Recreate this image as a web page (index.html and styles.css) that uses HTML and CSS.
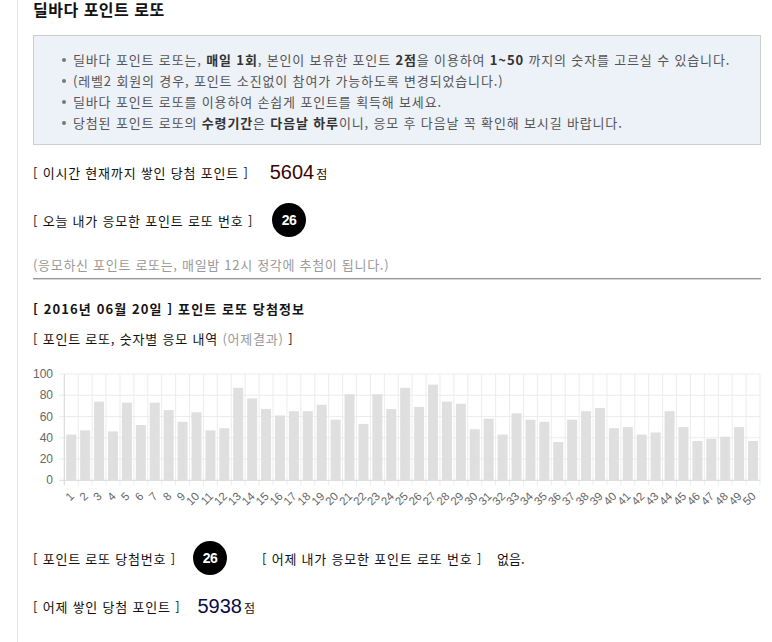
FILE: index.html
```html
<!DOCTYPE html>
<html lang="ko">
<head>
<meta charset="utf-8">
<title>딜바다 포인트 로또</title>
<link rel="stylesheet" href="styles.css">
</head>
<body>
<div class="page">
  <h2 class="title">딜바다 포인트 로또</h2>

  <div class="notice">
    <ul>
      <li>딜바다 포인트 로또는, <b>매일 1회</b>, 본인이 보유한 포인트 <b>2점</b>을 이용하여 <b>1~50</b> 까지의 숫자를 고르실 수 있습니다.</li>
      <li>(레벨2 회원의 경우, 포인트 소진없이 참여가 가능하도록 변경되었습니다.)</li>
      <li>딜바다 포인트 로또를 이용하여 손쉽게 포인트를 획득해 보세요.</li>
      <li>당첨된 포인트 로또의 <b>수령기간</b>은 <b>다음날 하루</b>이니, 응모 후 다음날 꼭 확인해 보시길 바랍니다.</li>
    </ul>
  </div>

  <div class="row row-points">
    <span class="label">[ 이시간 현재까지 쌓인 당첨 포인트 ]</span>
    <span class="big big-red">5604</span><span class="unit">점</span>
  </div>

  <div class="row row-ball">
    <span class="label">[ 오늘 내가 응모한 포인트 로또 번호 ]</span>
    <span class="ball ball-today">26</span>
  </div>

  <p class="note">(응모하신 포인트 로또는, 매일밤 12시 정각에 추첨이 됩니다.)</p>

  <hr class="divider">

  <h3 class="result-title">[ 2016년 06월 20일 ] 포인트 로또 당첨정보</h3>
  <p class="sub">[ 포인트 로또, 숫자별 응모 내역 <span class="muted">(어제결과)</span> ]</p>

  <svg class="chart" width="728" height="150" viewBox="0 0 728 150">
    <g transform="translate(31.3 121.3) scale(13.914 -1.063)">
      <path class="grid" vector-effect="non-scaling-stroke" d="M0 -4.7V100M1 -4.7V100M2 -4.7V100M3 -4.7V100M4 -4.7V100M5 -4.7V100M6 -4.7V100M7 -4.7V100M8 -4.7V100M9 -4.7V100M10 -4.7V100M11 -4.7V100M12 -4.7V100M13 -4.7V100M14 -4.7V100M15 -4.7V100M16 -4.7V100M17 -4.7V100M18 -4.7V100M19 -4.7V100M20 -4.7V100M21 -4.7V100M22 -4.7V100M23 -4.7V100M24 -4.7V100M25 -4.7V100M26 -4.7V100M27 -4.7V100M28 -4.7V100M29 -4.7V100M30 -4.7V100M31 -4.7V100M32 -4.7V100M33 -4.7V100M34 -4.7V100M35 -4.7V100M36 -4.7V100M37 -4.7V100M38 -4.7V100M39 -4.7V100M40 -4.7V100M41 -4.7V100M42 -4.7V100M43 -4.7V100M44 -4.7V100M45 -4.7V100M46 -4.7V100M47 -4.7V100M48 -4.7V100M49 -4.7V100M50 -4.7V100M-0.36 20H50M-0.36 40H50M-0.36 60H50M-0.36 80H50M-0.36 100H50"/>
      <path class="axis" vector-effect="non-scaling-stroke" d="M-0.36 0H50M0 -4.7V100"/>
      <g class="bars">
        <rect x="0.14" width="0.72" height="43"/>
        <rect x="1.14" width="0.72" height="47"/>
        <rect x="2.14" width="0.72" height="74"/>
        <rect x="3.14" width="0.72" height="46"/>
        <rect x="4.14" width="0.72" height="73"/>
        <rect x="5.14" width="0.72" height="52"/>
        <rect x="6.14" width="0.72" height="73"/>
        <rect x="7.14" width="0.72" height="66"/>
        <rect x="8.14" width="0.72" height="55"/>
        <rect x="9.14" width="0.72" height="64"/>
        <rect x="10.14" width="0.72" height="47"/>
        <rect x="11.14" width="0.72" height="49"/>
        <rect x="12.14" width="0.72" height="87"/>
        <rect x="13.14" width="0.72" height="77"/>
        <rect x="14.14" width="0.72" height="67"/>
        <rect x="15.14" width="0.72" height="61"/>
        <rect x="16.14" width="0.72" height="65"/>
        <rect x="17.14" width="0.72" height="65"/>
        <rect x="18.14" width="0.72" height="71"/>
        <rect x="19.14" width="0.72" height="57"/>
        <rect x="20.14" width="0.72" height="81"/>
        <rect x="21.14" width="0.72" height="53"/>
        <rect x="22.14" width="0.72" height="81"/>
        <rect x="23.14" width="0.72" height="67"/>
        <rect x="24.14" width="0.72" height="87"/>
        <rect x="25.14" width="0.72" height="69"/>
        <rect x="26.14" width="0.72" height="90"/>
        <rect x="27.14" width="0.72" height="74"/>
        <rect x="28.14" width="0.72" height="72"/>
        <rect x="29.14" width="0.72" height="48"/>
        <rect x="30.14" width="0.72" height="58"/>
        <rect x="31.14" width="0.72" height="43"/>
        <rect x="32.14" width="0.72" height="63"/>
        <rect x="33.14" width="0.72" height="57"/>
        <rect x="34.14" width="0.72" height="55"/>
        <rect x="35.14" width="0.72" height="36"/>
        <rect x="36.14" width="0.72" height="57"/>
        <rect x="37.14" width="0.72" height="65"/>
        <rect x="38.14" width="0.72" height="68"/>
        <rect x="39.14" width="0.72" height="49"/>
        <rect x="40.14" width="0.72" height="50"/>
        <rect x="41.14" width="0.72" height="43"/>
        <rect x="42.14" width="0.72" height="45"/>
        <rect x="43.14" width="0.72" height="65"/>
        <rect x="44.14" width="0.72" height="50"/>
        <rect x="45.14" width="0.72" height="37"/>
        <rect x="46.14" width="0.72" height="39"/>
        <rect x="47.14" width="0.72" height="41"/>
        <rect x="48.14" width="0.72" height="50"/>
        <rect x="49.14" width="0.72" height="37"/>
      </g>
    </g>
    <g class="ylabels">
      <text x="20" y="19">100</text>
      <text x="20" y="40.3">80</text>
      <text x="20" y="61.6">60</text>
      <text x="20" y="82.8">40</text>
      <text x="20" y="104.1">20</text>
      <text x="20" y="125.3">0</text>
    </g>
    <g class="xlabels">
      <text transform="translate(41.8 138) rotate(-45)">1</text>
      <text transform="translate(55.7 138) rotate(-45)">2</text>
      <text transform="translate(69.6 138) rotate(-45)">3</text>
      <text transform="translate(83.5 138) rotate(-45)">4</text>
      <text transform="translate(97.4 138) rotate(-45)">5</text>
      <text transform="translate(111.3 138) rotate(-45)">6</text>
      <text transform="translate(125.2 138) rotate(-45)">7</text>
      <text transform="translate(139.2 138) rotate(-45)">8</text>
      <text transform="translate(153.1 138) rotate(-45)">9</text>
      <text transform="translate(167.0 138) rotate(-45)">10</text>
      <text transform="translate(180.9 138) rotate(-45)">11</text>
      <text transform="translate(194.8 138) rotate(-45)">12</text>
      <text transform="translate(208.7 138) rotate(-45)">13</text>
      <text transform="translate(222.6 138) rotate(-45)">14</text>
      <text transform="translate(236.6 138) rotate(-45)">15</text>
      <text transform="translate(250.5 138) rotate(-45)">16</text>
      <text transform="translate(264.4 138) rotate(-45)">17</text>
      <text transform="translate(278.3 138) rotate(-45)">18</text>
      <text transform="translate(292.2 138) rotate(-45)">19</text>
      <text transform="translate(306.1 138) rotate(-45)">20</text>
      <text transform="translate(320.0 138) rotate(-45)">21</text>
      <text transform="translate(334.0 138) rotate(-45)">22</text>
      <text transform="translate(347.9 138) rotate(-45)">23</text>
      <text transform="translate(361.8 138) rotate(-45)">24</text>
      <text transform="translate(375.7 138) rotate(-45)">25</text>
      <text transform="translate(389.6 138) rotate(-45)">26</text>
      <text transform="translate(403.5 138) rotate(-45)">27</text>
      <text transform="translate(417.4 138) rotate(-45)">28</text>
      <text transform="translate(431.4 138) rotate(-45)">29</text>
      <text transform="translate(445.3 138) rotate(-45)">30</text>
      <text transform="translate(459.2 138) rotate(-45)">31</text>
      <text transform="translate(473.1 138) rotate(-45)">32</text>
      <text transform="translate(487.0 138) rotate(-45)">33</text>
      <text transform="translate(500.9 138) rotate(-45)">34</text>
      <text transform="translate(514.8 138) rotate(-45)">35</text>
      <text transform="translate(528.8 138) rotate(-45)">36</text>
      <text transform="translate(542.7 138) rotate(-45)">37</text>
      <text transform="translate(556.6 138) rotate(-45)">38</text>
      <text transform="translate(570.5 138) rotate(-45)">39</text>
      <text transform="translate(584.4 138) rotate(-45)">40</text>
      <text transform="translate(598.3 138) rotate(-45)">41</text>
      <text transform="translate(612.2 138) rotate(-45)">42</text>
      <text transform="translate(626.2 138) rotate(-45)">43</text>
      <text transform="translate(640.1 138) rotate(-45)">44</text>
      <text transform="translate(654.0 138) rotate(-45)">45</text>
      <text transform="translate(667.9 138) rotate(-45)">46</text>
      <text transform="translate(681.8 138) rotate(-45)">47</text>
      <text transform="translate(695.7 138) rotate(-45)">48</text>
      <text transform="translate(709.6 138) rotate(-45)">49</text>
      <text transform="translate(723.6 138) rotate(-45)">50</text>
    </g>
  </svg>

  <div class="row row-result">
    <span class="label">[ 포인트 로또 당첨번호 ]</span>
    <span class="ball ball-win">26</span>
    <span class="label label-mine">[ 어제 내가 응모한 포인트 로또 번호 ]</span>
    <span class="none">없음.</span>
  </div>

  <div class="row row-yesterday">
    <span class="label">[ 어제 쌓인 당첨 포인트 ]</span>
    <span class="big big-blue">5938</span><span class="unit">점</span>
  </div>
</div>
</body>
</html>
```

FILE: styles.css
```css
html, body {
  margin: 0;
  padding: 0;
  background: #fff;
}

body {
  font-family: "Noto Sans CJK KR", "Noto Sans", sans-serif;
  font-size: 13px;
  color: #222;
}

.page {
  margin-left: 17px;
  border-left: 1px solid #e6e6e6;
  padding: 0 11px 0 15px;
  min-height: 642px;
  box-sizing: border-box;
}

.title {
  margin: 0;
  font-size: 16px;
  line-height: 18px;
  font-weight: bold;
  color: #111;
  letter-spacing: 0.5px;
}

.notice {
  margin-top: 17px;
  border: 1px solid #cdcdcd;
  background: #edf1f8;
  padding: 13px 0 11px;
}

.notice ul {
  margin: 0;
  padding: 0 0 0 39px;
  list-style: none;
}

.notice li {
  position: relative;
  line-height: 21px;
  color: #555;
  letter-spacing: 0.85px;
}

.notice li::before {
  content: "";
  position: absolute;
  left: -11px;
  top: 9px;
  width: 4px;
  height: 4px;
  border-radius: 50%;
  background: #777;
}

.notice b {
  color: #333;
}

.row {
  display: flex;
  align-items: center;
}

.label {
  letter-spacing: 0.8px;
  color: #111;
}

.row-points {
  margin-top: 12px;
  height: 30px;
}

.big {
  font-family: "Liberation Sans", Arial, sans-serif;
  font-size: 20px;
  margin-left: 21px;
  line-height: 30px;
  letter-spacing: 0;
}

.big-red {
  color: #3a0505;
}

.big-blue {
  color: #0a0a45;
  margin-left: 17px;
}

.unit {
  margin-left: 2px;
  font-size: 12px;
  padding-top: 3px;
  color: #111;
}

.row-ball {
  margin-top: 16px;
  height: 34px;
}

.ball {
  width: 34px;
  height: 34px;
  border-radius: 50%;
  background: #000;
  color: #fff;
  font-family: "Liberation Sans", Arial, sans-serif;
  font-weight: bold;
  font-size: 14px;
  letter-spacing: -0.5px;
  display: flex;
  align-items: center;
  justify-content: center;
}

.ball-today {
  margin-left: 19px;
}

.note {
  margin: 18px 0 0;
  line-height: 20px;
  color: #999;
  letter-spacing: 0.7px;
}

.divider {
  margin: 3px 0 0;
  border: 0;
  border-top: 1px solid #999;
  border-bottom: 1px solid #d5d5d5;
  height: 0;
}

.result-title {
  margin: 19px 0 0;
  font-size: 13px;
  line-height: 20px;
  font-weight: bold;
  color: #141414;
  letter-spacing: 1.1px;
}

.sub {
  margin: 10px 0 0;
  line-height: 20px;
  letter-spacing: 0.8px;
  color: #111;
}

.muted {
  color: #999;
}

.chart {
  display: block;
  margin-top: 10px;
}

.grid {
  fill: none;
  stroke: #ececec;
  stroke-width: 1;
}

.axis {
  fill: none;
  stroke: #d9d9d9;
  stroke-width: 1;
}

.bars rect {
  fill: #dfdfdf;
}

.ylabels text {
  font-family: "Liberation Sans", Arial, sans-serif;
  font-size: 12px;
  fill: #666;
  text-anchor: end;
}

.xlabels text {
  font-family: "Liberation Sans", Arial, sans-serif;
  font-size: 11.5px;
  fill: #666;
  text-anchor: end;
}

.row-result {
  margin-top: 32px;
  height: 34px;
}

.ball-win {
  margin-left: 17px;
}

.label-mine {
  margin-left: 35px;
}

.none {
  margin-left: 15px;
  color: #111;
}

.row-yesterday {
  margin-top: 16px;
  height: 30px;
}
```
